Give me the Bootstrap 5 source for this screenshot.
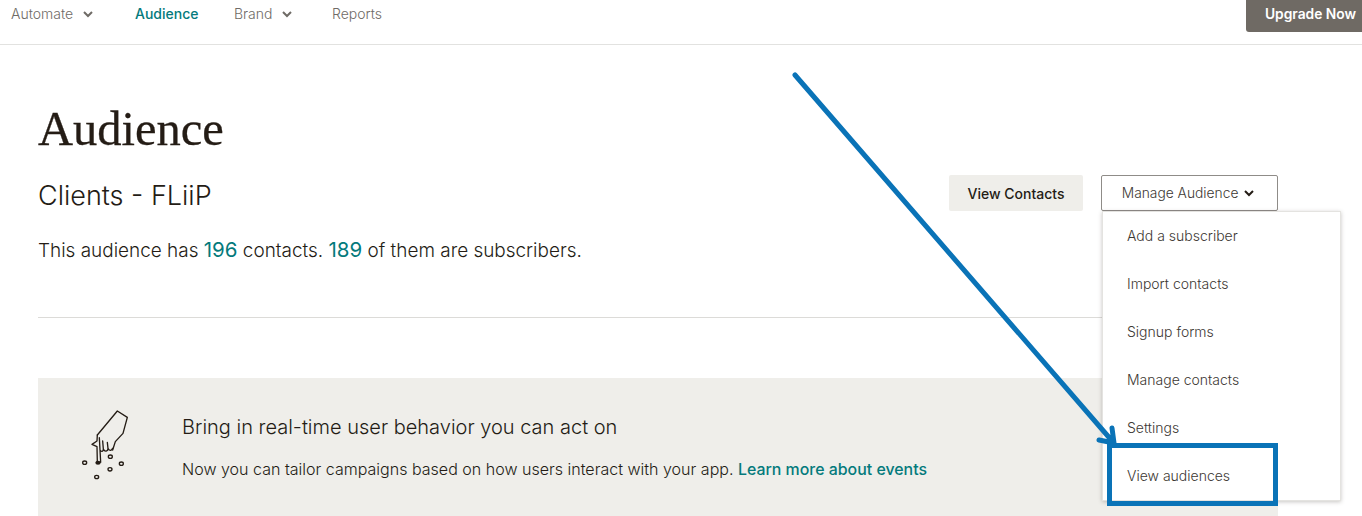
<!DOCTYPE html>
<html>
<head>
    <title>Audience</title>
    <link href="https://cdn.jsdelivr.net/npm/bootstrap@5.3.0/dist/css/bootstrap.min.css" rel="stylesheet">
    <style>
        html, body { height: 516px; overflow: hidden; }
        body { font-family: Inter, "Liberation Sans", sans-serif; color: #241c15; position: relative; }
        .top-bar { height: 45px; border-bottom: 1px solid #e2e2e0; }
        .top-link { font-size: 14px; color: #6f6b66; line-height: 28px; margin-top: 0; text-decoration: none; font-weight: 300; }
        .top-link.on { color: #047a7c; font-weight: 500; }
        .top-link svg { margin-left: 6px; vertical-align: 1px; }
        .nav-a { margin-left: 11px; width: 124px; }
        .nav-b { width: 99px; }
        .nav-c { width: 98px; }
        .upgrade-btn { width: 116px; height: 32px; background: #6f6a64; color: #fff; font-size: 13.8px; font-weight: 600; border: 0; border-radius: 0 0 0 3px; padding: 0 0 4px 13px; }
        .page-wrap { padding: 0 84px 0 38px; }
        .page-title { font-family: "Liberation Serif", serif; font-size: 48.5px; line-height: 56px; margin: 56px 0 0; color: #241c15; -webkit-text-stroke: .3px #241c15; }
        .list-name { font-size: 27px; font-weight: 300; line-height: 36px; margin: 3px 0 0; }
        .stats-line { font-size: 18.95px; line-height: 28px; margin: 23px 0 0; font-weight: 300; }
        .stats-line b { color: #047a7c; font-size: 20.5px; font-weight: 400; line-height: 1; }
        .head-row { margin-top: 18px; }
        .view-btn { height: 36px; width: 134px; padding: 0; background: #efeeea; border: 0; border-radius: 2px; font-size: 14px; font-weight: 500; color: #241c15; }
        .manage-btn { height: 36px; width: 177px; margin-left: 18px; padding: 0 3px 0 0; background: #fff; border: 1px solid #8f8c88; border-radius: 2px; font-size: 13.8px; color: #3d3833; font-weight: 300; }
        .manage-btn svg { margin-left: 2px; vertical-align: 1px; }
        .split-line { border-top: 1px solid #dcdbd8; margin: 52px 0 0; opacity: 1; }
        .promo { background: #efeeea; height: 138px; margin-top: 60px; padding: 30px 0 0 144px; position: relative; }
        .promo-icon { position: absolute; left: 40px; top: 27px; }
        .promo-title { font-size: 20px; font-weight: 300; line-height: 38px; margin: 0; }
        .promo-text { font-size: 16.05px; font-weight: 300; line-height: 24px; margin: 11px 0 0; }
        .promo-text a { color: #047a7c; font-weight: 500; font-size: 15.9px; text-decoration: none; }
        .manage-menu { position: absolute; left: 1102px; top: 211px; width: 239px; height: 290px; padding: 0; margin: 0; border: 1px solid #e4e3e0; border-radius: 0; box-shadow: 0 1px 4px rgba(36,28,21,.25); display: block; }
        .manage-menu .dropdown-item { font-size: 14px; height: 48px; line-height: 48px; padding: 0 0 0 24px; color: #3d3833; font-weight: 300; }
        .mark-box { position: absolute; left: 1107px; top: 443px; width: 171px; height: 63px; border: 5px solid #0a73b7; z-index: 1001; }
        .mark-arrow { position: absolute; left: 780px; top: 60px; z-index: 1001; }
    </style>
</head>
<body>
    <div class="top-bar d-flex align-items-start">
        <a class="top-link nav-a" href="#">Automate <svg width="10" height="7" viewBox="0 0 10 7"><path d="M1 1l4 4 4-4" fill="none" stroke="#6f6b66" stroke-width="2"/></svg></a>
        <a class="top-link on nav-b" href="#">Audience</a>
        <a class="top-link nav-c" href="#">Brand <svg width="10" height="7" viewBox="0 0 10 7"><path d="M1 1l4 4 4-4" fill="none" stroke="#6f6b66" stroke-width="2"/></svg></a>
        <a class="top-link" href="#">Reports</a>
        <button class="upgrade-btn ms-auto">Upgrade Now</button>
    </div>

    <div class="page-wrap">
        <h1 class="page-title">Audience</h1>
        <div class="head-row d-flex align-items-start">
            <h2 class="list-name">Clients - FLiiP</h2>
            <button class="view-btn ms-auto">View Contacts</button>
            <button class="manage-btn">Manage Audience <svg width="10" height="7" viewBox="0 0 10 7"><path d="M1 1l4 4 4-4" fill="none" stroke="#241c15" stroke-width="2"/></svg></button>
        </div>
        <p class="stats-line">This audience has <b>196</b> contacts. <b>189</b> of them are subscribers.</p>
        <hr class="split-line">
        <div class="promo">
            <svg class="promo-icon" width="54" height="80" viewBox="0 0 162 240">
                <g fill="none" stroke="#241c15" stroke-width="4" stroke-linejoin="round" stroke-linecap="round">
                    <path d="M58 90L118 18 148 37 135 85 112 110 104 135"/>
                    <path d="M58 90L57 108 42 118 57 125 58 172"/>
                    <path d="M64 98L68 172 M66 135C70 142 76 140 76 132L74 108M76 132C80 142 90 140 90 130L88 112M90 130C94 140 102 136 104 130"/>
                    <ellipse cx="20" cy="173" rx="6" ry="5"/>
                    <ellipse cx="97" cy="155" rx="6" ry="5"/>
                    <ellipse cx="130" cy="176" rx="6" ry="5"/>
                    <ellipse cx="96" cy="193" rx="6" ry="5"/>
                    <ellipse cx="56" cy="216" rx="6" ry="5"/>
                </g>
                <ellipse cx="60" cy="173" rx="8" ry="6" fill="#241c15"/>
            </svg>
            <h3 class="promo-title">Bring in real-time user behavior you can act on</h3>
            <p class="promo-text">Now you can tailor campaigns based on how users interact with your app. <a href="#">Learn more about events</a></p>
        </div>
    </div>

    <ul class="dropdown-menu manage-menu">
        <li><a class="dropdown-item" href="#">Add a subscriber</a></li>
        <li><a class="dropdown-item" href="#">Import contacts</a></li>
        <li><a class="dropdown-item" href="#">Signup forms</a></li>
        <li><a class="dropdown-item" href="#">Manage contacts</a></li>
        <li><a class="dropdown-item" href="#">Settings</a></li>
        <li><a class="dropdown-item" href="#">View audiences</a></li>
    </ul>

    <div class="mark-box"></div>
    <svg class="mark-arrow" width="350" height="400" viewBox="780 60 350 400">
        <path d="M795 75L1113 442M1099 440L1114 443 1112 428" fill="none" stroke="#0a73b7" stroke-width="5" stroke-linecap="round" stroke-linejoin="round"/>
    </svg>

    <script src="https://cdn.jsdelivr.net/npm/bootstrap@5.3.0/dist/js/bootstrap.bundle.min.js"></script>
</body>
</html>
